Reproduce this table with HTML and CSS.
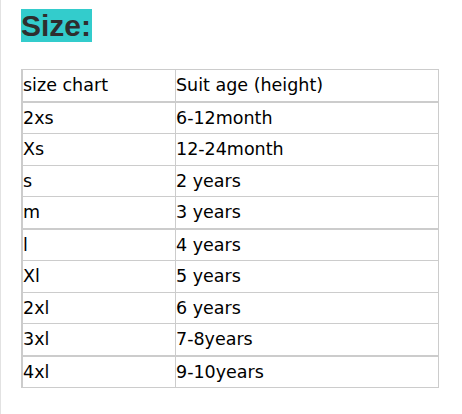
FILE: index.html
```html
<!DOCTYPE html>
<html>
<head>
<meta charset="utf-8">
<link rel="stylesheet" href="styles.css">
</head>
<body>
<div class="page">
  <h2 class="title"><span class="title-mark">Size:</span></h2>
  <table class="chart">
    <tbody>
      <tr class="thick"><td class="c1">size chart</td><td>Suit age (height)</td></tr>
      <tr><td class="c1">2xs</td><td>6-12month</td></tr>
      <tr><td class="c1">Xs</td><td>12-24month</td></tr>
      <tr><td class="c1">s</td><td>2 years</td></tr>
      <tr class="thick"><td class="c1">m</td><td>3 years</td></tr>
      <tr><td class="c1">l</td><td>4 years</td></tr>
      <tr><td class="c1">Xl</td><td>5 years</td></tr>
      <tr><td class="c1">2xl</td><td>6 years</td></tr>
      <tr class="thick"><td class="c1">3xl</td><td>7-8years</td></tr>
      <tr><td class="c1">4xl</td><td>9-10years</td></tr>
    </tbody>
  </table>
</div>
</body>
</html>
```
FILE: styles.css
```css
html, body {
  margin: 0;
  padding: 0;
  background: #fff;
}
body {
  min-height: 414px;
  border-left: 1px solid #e2e2e2;
  box-sizing: border-box;
}
.page {
  padding: 9px 0 0 20px;
}
.title {
  margin: 0;
  font-family: "Liberation Sans", Arial, sans-serif;
  font-weight: bold;
  font-size: 30px;
  line-height: 33px;
  color: #2e2e2e;
}
.title-mark {
  display: inline-block;
  background: #33cccc;
  padding: 0 1px 0 0;
}
.chart {
  margin-top: 27px;
  width: 418px;
  border-collapse: collapse;
  border-left: 2px solid #cccccc;
  font-family: "DejaVu Sans", Verdana, sans-serif;
  font-size: 17.5px;
  color: #000;
}
.chart td {
  border: 1px solid #cccccc;
  height: 30.5px;
  padding: 0 1px 0 0;
  vertical-align: middle;
  line-height: 20px;
}
.chart .c1 {
  width: 151px;
}
.chart tr.thick td {
  border-bottom-width: 2px;
}
```
